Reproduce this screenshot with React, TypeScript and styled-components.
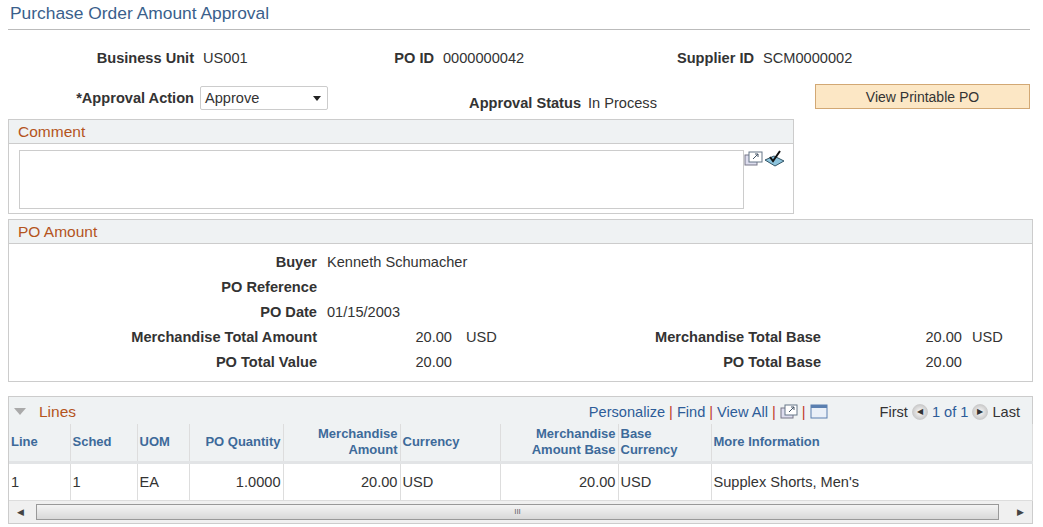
import React from 'react'
import styled, { createGlobalStyle } from 'styled-components'

const Global = createGlobalStyle`
  body { margin: 0; background: #fff; font-family: Arial, "Liberation Sans", sans-serif; font-size: 14.6px; color: #333; }
`

const Page = styled.div`
  width: 1043px;
  padding: 3px 0 0 8px;
  box-sizing: border-box;
`

const Title = styled.div`
  font-size: 17.4px;
  color: #3a5f8c;
  padding: 0 0 5px 2px;
  border-bottom: 1px solid #bbb;
  width: 1020px;
`

const Row = styled.div<{ $h: number }>`
  display: flex;
  align-items: center;
  height: ${p => p.$h}px;
`

const Field = styled.div<{ $lw: number; $w: number }>`
  display: flex;
  align-items: center;
  width: ${p => p.$w}px;
  flex-shrink: 0;
  label {
    width: ${p => p.$lw}px;
    text-align: right;
    font-weight: bold;
    color: #333;
    padding-right: 9px;
    box-sizing: border-box;
    flex-shrink: 0;
  }
`

const Select = styled.div`
  width: 128px;
  height: 24px;
  border: 1px solid #ccc;
  border-radius: 2px;
  box-sizing: border-box;
  display: flex;
  align-items: center;
  justify-content: space-between;
  padding: 0 6px 0 4px;
  &::after { content: ''; border: 4px solid transparent; border-top: 5px solid #222; margin-top: 4px; }
`

const Button = styled.div`
  width: 215px;
  height: 25px;
  box-sizing: border-box;
  background: #fce7c5;
  border: 1px solid #d2a874;
  display: flex;
  align-items: center;
  justify-content: center;
  color: #333;
  font-size: 14px;
  margin-top: -2px;
`

const Box = styled.div<{ $w: number }>`
  width: ${p => p.$w}px;
  border: 1px solid #ccc;
  box-sizing: border-box;
`

const BoxHead = styled.div`
  height: 23px;
  background: #eff2f3;
  border-bottom: 1px solid #ccc;
  color: #b4541c;
  font-size: 15.5px;
  display: flex;
  align-items: center;
  padding-left: 9px;
`

const CommentBody = styled.div`
  display: flex;
  padding: 6px 0 4px 10px;
`

const TextArea = styled.div`
  width: 725px;
  height: 59px;
  border: 1px solid #ccc;
  box-sizing: border-box;
`

const AmountBody = styled.div`
  padding: 5px 0 7px;
`

const AmtRow = styled.div`
  display: flex;
  align-items: center;
  height: 25px;
`

const Lbl = styled.div<{ $w: number }>`
  width: ${p => p.$w}px;
  text-align: right;
  font-weight: bold;
  padding-right: 10px;
  box-sizing: border-box;
  flex-shrink: 0;
`

const Num = styled.div<{ $w: number }>`
  width: ${p => p.$w}px;
  text-align: right;
  flex-shrink: 0;
`

const Cur = styled.div<{ $pad: number }>`
  padding-left: ${p => p.$pad}px;
  width: 54px;
  box-sizing: border-box;
  flex-shrink: 0;
`

const Grid = styled.div`
  width: 1025px;
  border: 1px solid #ccc;
  box-sizing: border-box;
  margin-top: 14px;
`

const GridHead = styled.div`
  height: 25px;
  background: #eff2f3;
  display: flex;
  align-items: center;
  padding: 2px 12px 0 4px;
  color: #b4541c;
  font-size: 15.5px;
`

const Nav = styled.div`
  margin-left: auto;
  display: flex;
  align-items: center;
  color: #2d5c98;
  font-size: 14.6px;
  gap: 4px;
  span.sep { color: #c0392b; }
  span.g { color: #333; }
`

const Table = styled.table`
  border-collapse: collapse;
  table-layout: fixed;
  width: 1023px;
  th {
    background: #eff2f3;
    color: #3d6a9a;
    font-size: 13px;
    font-weight: bold;
    height: 38px;
    padding: 0 2px;
    border-right: 1px solid #ddd;
    border-bottom: 3px solid #e2e4e6;
    line-height: 16px;
    box-sizing: border-box;
  }
  td {
    height: 36px;
    padding: 0 2px;
    border-right: 1px solid #ddd;
    border-bottom: 1px solid #ddd;
  }
`

const Scroll = styled.div`
  height: 22px;
  display: flex;
  align-items: center;
  background: #f0f0f0;
  padding: 0 8px;
  gap: 12px;
  font-size: 9px;
  color: #444;
`

const Thumb = styled.div`
  width: 963px;
  height: 16px;
  border: 1px solid #999;
  box-sizing: border-box;
  background: linear-gradient(#f4f4f4, #d8d8d8);
  display: flex;
  align-items: center;
  justify-content: center;
  font-size: 8px;
  color: #666;
`

const Circ = styled.span`
  display: inline-block;
  width: 16px;
  height: 16px;
  border-radius: 50%;
  background: radial-gradient(#fafafa, #bbb);
  border: 1px solid #ccc;
  box-sizing: border-box;
  font-size: 8px;
  color: #333;
  text-align: center;
  line-height: 14px;
`

const cols = [
  { h: 'Line', w: 61, a: 'left' },
  { h: 'Sched', w: 67, a: 'left' },
  { h: 'UOM', w: 52, a: 'left' },
  { h: 'PO Quantity', w: 94, a: 'right' },
  { h: 'Merchandise Amount', w: 117, a: 'right' },
  { h: 'Currency', w: 100, a: 'left' },
  { h: 'Merchandise Amount Base', w: 118, a: 'right' },
  { h: 'Base Currency', w: 93, a: 'left' },
  { h: 'More Information', w: 321, a: 'left' },
]
const data = ['1', '1', 'EA', '1.0000', '20.00', 'USD', '20.00', 'USD', "Supplex Shorts, Men's"]

export default function App() {
  return (
    <Page>
      <Global />
      <Title>Purchase Order Amount Approval</Title>
      <Row $h={56}>
        <Field $lw={195} $w={375}><label>Business Unit</label>US001</Field>
        <Field $lw={60} $w={290}><label>PO ID</label>0000000042</Field>
        <Field $lw={90} $w={300}><label>Supplier ID</label>SCM0000002</Field>
      </Row>
      <Row $h={24} style={{ alignItems: 'flex-start' }}>
        <Field $lw={192} $w={375} style={{ height: 24 }}><label style={{ paddingRight: 6 }}>*Approval Action</label><Select>Approve</Select></Field>
        <Field $lw={205} $w={432} style={{ paddingTop: 9 }}><label style={{ paddingRight: 7 }}>Approval Status</label>In Process</Field>
        <Button>View Printable PO</Button>
      </Row>
      <div style={{ height: 9 }} />
      <Box $w={786}>
        <BoxHead>Comment</BoxHead>
        <CommentBody>
          <TextArea />
          <svg width="42" height="18" viewBox="0 0 42 18">
            <rect x="1" y="5" width="12" height="10" fill="#dde" stroke="#778" />
            <rect x="5" y="2" width="13" height="10" fill="#fff" stroke="#678" />
            <path d="M9 9 L14 4 M11 4 H14 V7" stroke="#456" fill="none" />
            <path d="M21 10 L30 6 L40 11 L31 16 Z" fill="#8cc3dc" stroke="#356" />
            <path d="M26 7 L29 11 L36 1" stroke="#111" strokeWidth="2" fill="none" />
          </svg>
        </CommentBody>
      </Box>
      <Box $w={1025} style={{ marginTop: 5 }}>
        <BoxHead>PO Amount</BoxHead>
        <AmountBody>
          <AmtRow><Lbl $w={318}>Buyer</Lbl>Kenneth Schumacher</AmtRow>
          <AmtRow><Lbl $w={318}>PO Reference</Lbl></AmtRow>
          <AmtRow><Lbl $w={318}>PO Date</Lbl>01/15/2003</AmtRow>
          <AmtRow>
            <Lbl $w={318}>Merchandise Total Amount</Lbl><Num $w={125}>20.00</Num><Cur $pad={14}>USD</Cur>
            <Lbl $w={325}>Merchandise Total Base</Lbl><Num $w={131}>20.00</Num><Cur $pad={10}>USD</Cur>
          </AmtRow>
          <AmtRow>
            <Lbl $w={318}>PO Total Value</Lbl><Num $w={125}>20.00</Num><Cur $pad={14} />
            <Lbl $w={325}>PO Total Base</Lbl><Num $w={131}>20.00</Num>
          </AmtRow>
        </AmountBody>
      </Box>
      <Grid>
        <GridHead>
          <svg width="14" height="10" style={{ marginRight: 12 }}><path d="M1 1 H13 L7 8 Z" fill="#aaa" /></svg>
          Lines
          <Nav>
            Personalize <span className="sep">|</span> Find <span className="sep">|</span> View All <span className="sep">|</span>
            <svg width="18" height="15"><rect x="1" y="4" width="12" height="10" fill="#dde" stroke="#778" /><rect x="5" y="1" width="12" height="10" fill="#fff" stroke="#678" /><path d="M9 8 L14 3 M11 3 H14 V6" stroke="#456" fill="none" /></svg>
            <span className="sep">|</span>
            <svg width="18" height="15"><rect x="1" y="1" width="16" height="13" fill="#eaf0f8" stroke="#5a7fb0" /><rect x="1" y="1" width="16" height="3" fill="#5a7fb0" /></svg>
            <span className="g" style={{ marginLeft: 48 }}>First</span> <Circ>◀</Circ> 1 of 1 <Circ>▶</Circ> <span className="g">Last</span>
          </Nav>
        </GridHead>
        <Table>
          <colgroup>{cols.map(c => <col key={c.h} style={{ width: c.w }} />)}</colgroup>
          <thead>
            <tr>{cols.map(c => <th key={c.h} style={{ textAlign: c.a as 'left' }}>{c.h}</th>)}</tr>
          </thead>
          <tbody>
            <tr>{data.map((d, i) => <td key={i} style={{ textAlign: cols[i].a as 'left' }}>{d}</td>)}</tr>
          </tbody>
        </Table>
        <Scroll>◀<Thumb>III</Thumb><span style={{ marginLeft: 'auto' }}>▶</span></Scroll>
      </Grid>
    </Page>
  )
}
